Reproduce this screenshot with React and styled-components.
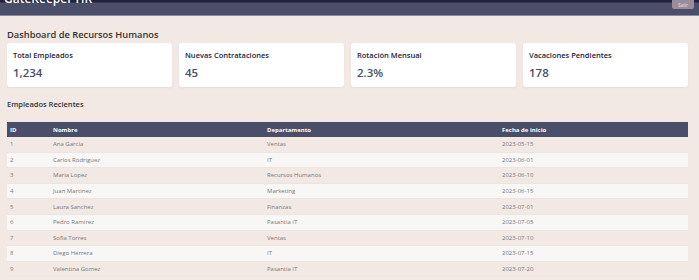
import React from "react";
import styled, { createGlobalStyle } from "styled-components";

const Global = createGlobalStyle`
  html, body { margin: 0; padding: 0; background: #f2e9e4; overflow: hidden; }
  body { font-family: "Open Sans", "Noto Sans", sans-serif; color: #333; }
`;

const Header = styled.header`
  height: 15px;
  background: linear-gradient(#22223b 0, #22223b 2px, #4a4e69 3px);
  border-bottom: 1px solid #8b8ba3;
  display: flex;
  justify-content: space-between;
  padding: 0 5px 0 4px;
  overflow: hidden;
`;

const Brand = styled.h1`
  margin: -9px 0 0;
  font-size: 12px;
  line-height: 16px;
  font-weight: 600;
  color: #fff;
  white-space: nowrap;
`;

const Logout = styled.button`
  margin-top: -8px;
  height: 17px;
  width: 22px;
  border: none;
  border-radius: 2px;
  background: #9a8c98;
  color: #e6dde0;
  font-family: inherit;
  font-size: 5px;
  padding: 8px 0 0;
`;

const Main = styled.main`
  padding: 12px 11px 0 7px;
`;

const PageTitle = styled.h2`
  margin: 0 0 2px;
  font-size: 9.3px;
  line-height: 13px;
  font-weight: 600;
  color: #333;
`;

const Cards = styled.div`
  display: grid;
  grid-template-columns: repeat(4, 1fr);
  gap: 7px;
`;

const Card = styled.div`
  background: #fff;
  border-radius: 3px;
  box-shadow: 0 1px 2px rgba(0, 0, 0, 0.06);
  height: 44px;
  padding: 7px 6px 0;
  box-sizing: border-box;
`;

const CardLabel = styled.div`
  font-size: 7.5px;
  line-height: 10px;
  font-weight: 600;
  color: #22223b;
`;

const CardValue = styled.div`
  margin-top: 6px;
  font-size: 11.5px;
  line-height: 14px;
  font-weight: 600;
  color: #4a4e69;
`;

const SectionTitle = styled.h3`
  margin: 12px 0 13px;
  font-size: 7.5px;
  line-height: 10px;
  font-weight: 600;
  color: #333;
`;

const Table = styled.table`
  width: 100%;
  border-collapse: collapse;
  table-layout: fixed;
`;

const Th = styled.th`
  background: #4a4e69;
  color: #fff;
  text-align: left;
  font-size: 6px;
  font-weight: 700;
  height: 15px;
  padding: 0 3px;
  box-sizing: border-box;
  width: ${(p) => p.$w}px;
`;

const Tr = styled.tr`
  &:nth-child(even) {
    background: #f8f7f6;
  }
  border-bottom: 1px solid #ece4df;
`;

const Td = styled.td`
  font-size: 6px;
  color: #777;
  height: 14.6px;
  padding: 0 3px;
`;

const stats = [
  ["Total Empleados", "1,234"],
  ["Nuevas Contrataciones", "45"],
  ["Rotación Mensual", "2.3%"],
  ["Vacaciones Pendientes", "178"],
];

const employees = [
  [1, "Ana Garcia", "Ventas", "2023-05-15"],
  [2, "Carlos Rodriguez", "IT", "2023-06-01"],
  [3, "Maria Lopez", "Recursos Humanos", "2023-06-10"],
  [4, "Juan Martinez", "Marketing", "2023-06-15"],
  [5, "Laura Sanchez", "Finanzas", "2023-07-01"],
  [6, "Pedro Ramirez", "Pasantia IT", "2023-07-05"],
  [7, "Sofia Torres", "Ventas", "2023-07-10"],
  [8, "Diego Herrera", "IT", "2023-07-15"],
  [9, "Valentina Gomez", "Pasantia IT", "2023-07-20"],
];

export default function App() {
  return (
    <>
      <Global />
      <Header>
        <Brand>GateKeeper HR</Brand>
        <Logout>Salir</Logout>
      </Header>
      <Main>
        <PageTitle>Dashboard de Recursos Humanos</PageTitle>
        <Cards>
          {stats.map(([l, v]) => (
            <Card key={l}>
              <CardLabel>{l}</CardLabel>
              <CardValue>{v}</CardValue>
            </Card>
          ))}
        </Cards>
        <SectionTitle>Empleados Recientes</SectionTitle>
        <Table>
          <thead>
            <tr>
              <Th $w={43}>ID</Th>
              <Th $w={214}>Nombre</Th>
              <Th $w={235}>Departamento</Th>
              <Th $w={189}>Fecha de inicio</Th>
            </tr>
          </thead>
          <tbody>
            {employees.map((e) => (
              <Tr key={e[0]}>
                {e.map((c, i) => (
                  <Td key={i}>{c}</Td>
                ))}
              </Tr>
            ))}
          </tbody>
        </Table>
      </Main>
    </>
  );
}
